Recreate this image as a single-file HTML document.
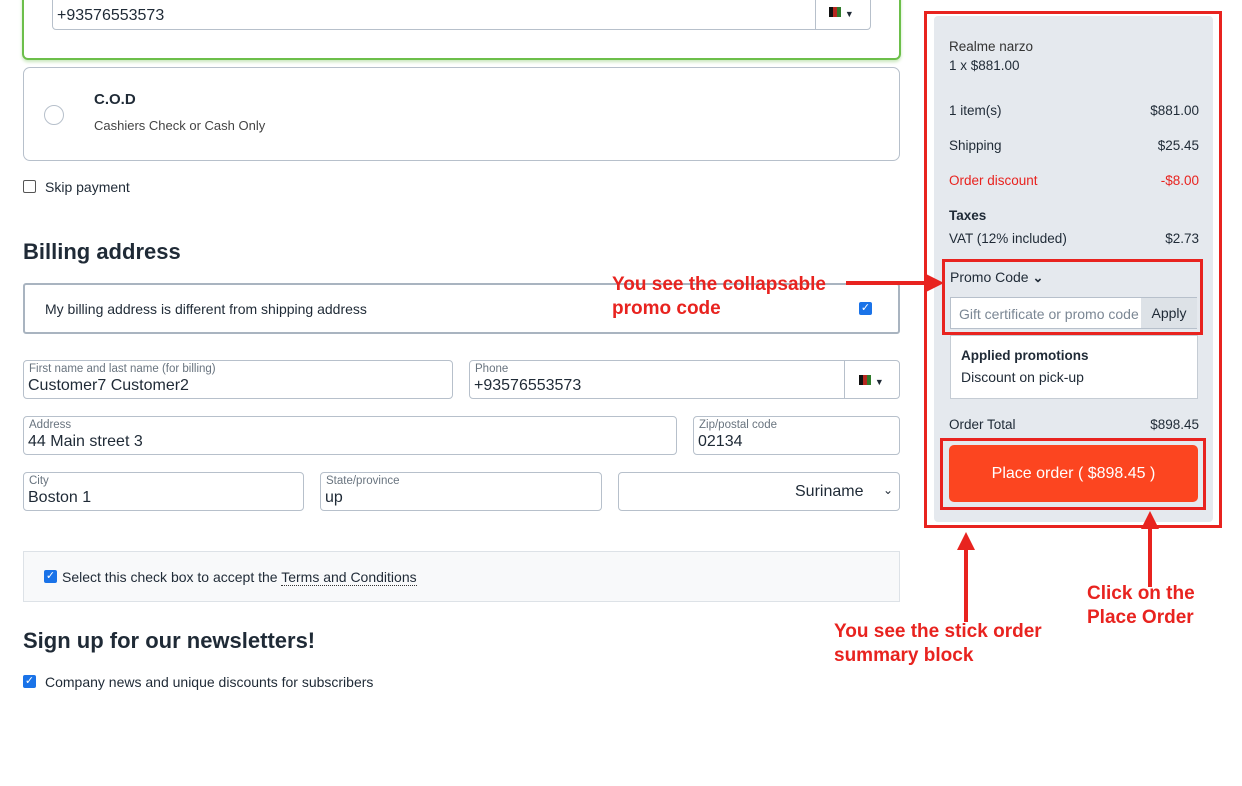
<!DOCTYPE html>
<html><head><style>
*{box-sizing:border-box;margin:0;padding:0}
body{width:1242px;height:786px;background:#fff;font-family:"Liberation Sans",sans-serif;color:#1f2a36;position:relative;overflow:hidden;font-size:14px}
.a{position:absolute}
.box{position:absolute;border:1px solid #b7c0cb;border-radius:4px;background:#fff}
.lbl{position:absolute;left:5px;top:2px;font-size:11.5px;color:#69747f}
.val{position:absolute;left:4px;top:16px;font-size:16px;color:#1f2a36}
.red{color:#e8231f;font-weight:bold;font-size:19px;line-height:24px}
.flag{display:inline-block;width:12px;height:10px;background:linear-gradient(90deg,#111 33%,#b6271f 33% 66%,#2f7a2b 66%)}
.row{position:absolute;left:949px;width:250px;font-size:13.5px;display:flex;justify-content:space-between}
</style></head><body>
<div class="a" style="left:22px;top:-10px;width:879px;height:70px;border:2px solid #6cbf4a;border-radius:6px;box-shadow:0 2px 3px #c9e8bd"></div>
<div class="box" style="left:52px;top:-10px;width:819px;height:40px"><span class="val" style="top:16px">+93576553573</span><div class="a" style="left:762px;top:0;width:1px;height:39px;background:#b7c0cb"></div><span class="a" style="left:776px;top:13px"><span class="flag"></span> <span style="font-size:9px">▼</span></span></div>
<div class="box" style="left:23px;top:67px;width:877px;height:94px;border-radius:7px"></div>
<div class="a" style="left:44px;top:105px;width:20px;height:20px;border:1px solid #b7c0cb;border-radius:50%"></div>
<div class="a" style="left:94px;top:91px;font-weight:bold;font-size:15px">C.O.D</div>
<div class="a" style="left:94px;top:118px;font-size:13px;color:#444">Cashiers Check or Cash Only</div>
<div class="a" style="left:23px;top:180px;width:13px;height:13px;border:1px solid #555;border-radius:2px"></div>
<div class="a" style="left:45px;top:179px;font-size:14px">Skip payment</div>
<div class="a" style="left:23px;top:239px;font-size:22px;font-weight:bold">Billing address</div>
<div class="a" style="left:23px;top:283px;width:877px;height:51px;border:2px solid #a9b4c0;border-radius:3px"></div>
<div class="a" style="left:45px;top:301px;font-size:14px">My billing address is different from shipping address</div>
<div class="a" style="left:859px;top:302px;width:13px;height:13px;background:#1a73e8;border-radius:2px;color:#fff;font-size:11px;line-height:13px;text-align:center">✓</div>
<div class="box" style="left:23px;top:360px;width:430px;height:39px"><span class="lbl">First name and last name (for billing)</span><span class="val">Customer7 Customer2</span></div>
<div class="box" style="left:469px;top:360px;width:431px;height:39px"><span class="lbl">Phone</span><span class="val">+93576553573</span><div class="a" style="left:374px;top:0;width:1px;height:37px;background:#b7c0cb"></div><span class="a" style="left:389px;top:11px"><span class="flag"></span> <span style="font-size:9px">▼</span></span></div>
<div class="box" style="left:23px;top:416px;width:654px;height:39px"><span class="lbl">Address</span><span class="val">44 Main street 3</span></div>
<div class="box" style="left:693px;top:416px;width:207px;height:39px"><span class="lbl">Zip/postal code</span><span class="val">02134</span></div>
<div class="box" style="left:23px;top:472px;width:281px;height:39px"><span class="lbl">City</span><span class="val">Boston 1</span></div>
<div class="box" style="left:320px;top:472px;width:282px;height:39px"><span class="lbl">State/province</span><span class="val">up</span></div>
<div class="box" style="left:618px;top:472px;width:282px;height:39px"><span class="a" style="left:176px;top:10px;font-size:16px">Suriname</span><span class="a" style="left:264px;top:10px;font-size:12px">⌄</span></div>
<div class="a" style="left:23px;top:551px;width:877px;height:51px;border:1px solid #dde2e7;background:#f8f9fa"></div>
<div class="a" style="left:44px;top:570px;width:13px;height:13px;background:#1a73e8;border-radius:2px;color:#fff;font-size:11px;line-height:13px;text-align:center">✓</div>
<div class="a" style="left:62px;top:569px;font-size:14px">Select this check box to accept the <span style="border-bottom:1px dotted #333">Terms and Conditions</span></div>
<div class="a" style="left:23px;top:628px;font-size:22px;font-weight:bold">Sign up for our newsletters!</div>
<div class="a" style="left:23px;top:675px;width:13px;height:13px;background:#1a73e8;border-radius:2px;color:#fff;font-size:11px;line-height:13px;text-align:center">✓</div>
<div class="a" style="left:45px;top:674px;font-size:14px">Company news and unique discounts for subscribers</div>

<div class="a" style="left:934px;top:16px;width:279px;height:506px;background:#e5e9ee;border-radius:4px"></div>
<div class="a" style="left:924px;top:11px;width:298px;height:517px;border:3px solid #e8231f"></div>
<div class="a" style="left:949px;top:39px;font-size:13.5px;color:#333">Realme narzo</div>
<div class="a" style="left:949px;top:58px;font-size:13.5px">1 x $881.00</div>
<div class="row" style="top:103px"><span>1 item(s)</span><span>$881.00</span></div>
<div class="row" style="top:138px"><span>Shipping</span><span>$25.45</span></div>
<div class="row" style="top:173px;color:#e8231f"><span>Order discount</span><span>-$8.00</span></div>
<div class="a" style="left:949px;top:208px;font-size:13.5px;font-weight:bold">Taxes</div>
<div class="row" style="top:231px"><span>VAT (12% included)</span><span>$2.73</span></div>
<div class="a" style="left:942px;top:259px;width:261px;height:76px;border:3px solid #e8231f"></div>
<div class="a" style="left:950px;top:269px;font-size:14px">Promo Code <b style="font-size:13px">⌄</b></div>
<div class="a" style="left:950px;top:297px;width:247px;height:32px;border:1px solid #b7c0cb;background:#fff"><span class="a" style="left:8px;top:8px;font-size:14px;color:#7b8794;white-space:nowrap;width:180px;overflow:hidden">Gift certificate or promo code</span><div class="a" style="left:190px;top:0;width:56px;height:30px;background:#dde2e7;font-size:14px;text-align:center;line-height:30px">Apply</div></div>
<div class="a" style="left:950px;top:335px;width:248px;height:64px;background:#fff;border:1px solid #c5ccd4"></div>
<div class="a" style="left:961px;top:348px;font-size:13.5px;font-weight:bold">Applied promotions</div>
<div class="a" style="left:961px;top:369px;font-size:14px">Discount on pick-up</div>
<div class="row" style="top:417px"><span>Order Total</span><span>$898.45</span></div>
<div class="a" style="left:940px;top:438px;width:266px;height:72px;border:3px solid #e8231f"></div>
<div class="a" style="left:949px;top:445px;width:249px;height:57px;background:#fc4520;border-radius:5px;color:#fff;font-size:16px;text-align:center;line-height:57px">Place order ( $898.45 )</div>

<div class="a red" style="left:612px;top:273px">You see the collapsable<br>promo code</div>
<div class="a" style="left:846px;top:281px;width:82px;height:4px;background:#e8231f"></div>
<div class="a" style="left:926px;top:274px;border-left:18px solid #e8231f;border-top:9px solid transparent;border-bottom:9px solid transparent"></div>
<div class="a" style="left:964px;top:548px;width:4px;height:74px;background:#e8231f"></div>
<div class="a" style="left:957px;top:532px;border-bottom:18px solid #e8231f;border-left:9px solid transparent;border-right:9px solid transparent"></div>
<div class="a" style="left:1148px;top:527px;width:4px;height:60px;background:#e8231f"></div>
<div class="a" style="left:1141px;top:511px;border-bottom:18px solid #e8231f;border-left:9px solid transparent;border-right:9px solid transparent"></div>
<div class="a red" style="left:834px;top:620px">You see the stick order<br>summary block</div>
<div class="a red" style="left:1087px;top:582px">Click on the<br>Place Order</div>
</body></html>
